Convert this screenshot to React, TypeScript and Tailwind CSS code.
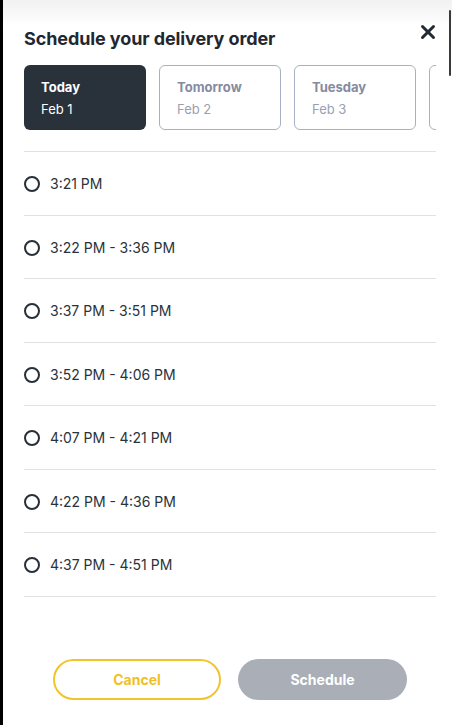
import { X } from 'lucide-react'

const days = [
  { label: 'Today', date: 'Feb 1', active: true },
  { label: 'Tomorrow', date: 'Feb 2', active: false },
  { label: 'Tuesday', date: 'Feb 3', active: false },
  { label: '', date: '', active: false },
]

const slots = [
  '3:21 PM',
  '3:22 PM - 3:36 PM',
  '3:37 PM - 3:51 PM',
  '3:52 PM - 4:06 PM',
  '4:07 PM - 4:21 PM',
  '4:22 PM - 4:36 PM',
  '4:37 PM - 4:51 PM',
]

export default function App() {
  return (
    <div
      className="relative flex h-[725px] w-[452px] overflow-hidden bg-white text-[#222b33]"
      style={{ fontFamily: 'Inter, "Noto Sans", sans-serif' }}
    >
      <div className="w-[3px] shrink-0 bg-black" />
      <div className="flex w-[449px] flex-col bg-[linear-gradient(to_bottom,#f1f1f1,#ffffff_26px)] pl-[21px] pr-[16px]">
        <div className="mt-[27px] flex h-[24px] items-center justify-between">
          <h1 className="text-[18px] font-bold leading-[24px] tracking-[-0.1px] text-[#1f2830]">
            Schedule your delivery order
          </h1>
          <X className="-mt-[15px] mr-[-3px] h-[22px] w-[22px] text-[#222b33]" strokeWidth={3.2} />
        </div>

        <div className="mt-[14px] flex w-[412px] gap-[13px] overflow-hidden">
          {days.map((d, i) => (
            <div
              key={i}
              className={`flex h-[65px] w-[122px] shrink-0 flex-col justify-center gap-[6px] rounded-[6px] pl-[17px] ${
                d.active ? 'bg-[#29323b] text-white' : 'border border-[#a9b0c6] bg-white'
              }`}
            >
              <span className={`text-[13px] font-bold leading-[16px] ${d.active ? 'text-white' : 'text-[#858ba0]'}`}>
                {d.label}
              </span>
              <span className={`text-[13px] leading-[16px] ${d.active ? 'text-white' : 'text-[#9aa0b1]'}`}>
                {d.date}
              </span>
            </div>
          ))}
        </div>

        <div className="mt-[21px] border-t border-[#e1e1e1]">
          {slots.map((s) => (
            <div key={s} className="flex h-[63.5px] items-center gap-[10px] border-b border-[#e1e1e1] pt-[2px]">
              <span className="h-[16px] w-[16px] rounded-full border-2 border-[#26303a]" />
              <span className="text-[14px] leading-[18px] text-[#2a323a]">{s}</span>
            </div>
          ))}
        </div>

        <div className="mt-[62px] flex justify-center gap-[17px]">
          <button className="h-[41px] w-[168px] rounded-full border-2 border-[#f2c42c] bg-white text-[14px] font-bold text-[#f0bf26]">
            Cancel
          </button>
          <button className="h-[41px] w-[169px] rounded-full bg-[#a9aeb7] text-[14px] font-bold text-white">
            Schedule
          </button>
        </div>
      </div>
      <div className="absolute right-[1px] top-[10px] h-[66px] w-[2px] rounded-full bg-[#3a3a3a]" />
    </div>
  )
}
